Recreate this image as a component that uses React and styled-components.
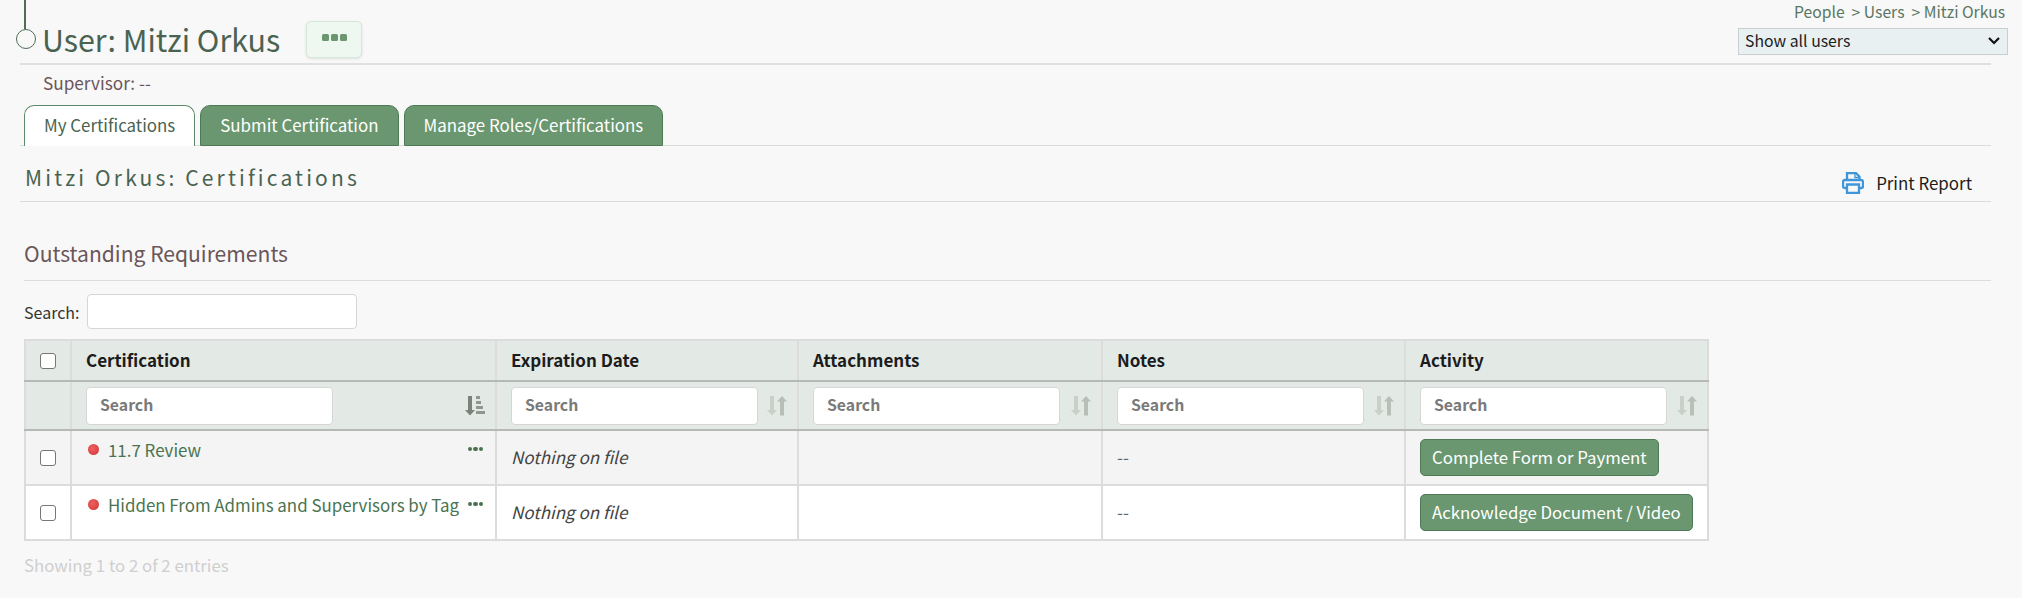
import React from 'react';
import styled, { createGlobalStyle } from 'styled-components';

const GlobalStyle = createGlobalStyle`
  html, body {
    margin: 0;
    padding: 0;
    background: #f8f8f8;
    font-family: "Noto Sans CJK JP", "Noto Sans", sans-serif;
    overflow: hidden;
  }
  * { box-sizing: border-box; }
`;

const Page = styled.div`
  width: 2022px;
  height: 598px;
  position: relative;
  overflow: hidden;
`;

const Timeline = styled.div`
  position: absolute;
  left: 24px;
  top: 0;
  width: 2px;
  height: 29px;
  background: #4f6d56;
`;

const TimelineDot = styled.div`
  position: absolute;
  left: 16px;
  top: 29px;
  width: 20px;
  height: 20px;
  border-radius: 50%;
  border: 1.5px solid #4f6d56;
`;

const Crumbs = styled.div`
  position: absolute;
  right: 17px;
  top: 2px;
  font-size: 15.7px;
  line-height: 20px;
  color: #5a7560;
`;

const UserSelect = styled.div`
  position: absolute;
  left: 1738px;
  top: 28px;
  width: 270px;
  height: 27px;
  background: #e9f0f2;
  border: 1px solid #c9cfcf;
  display: flex;
  align-items: center;
  justify-content: space-between;
  padding: 0 6px 2px 6px;
  font-size: 15.8px;
  color: #1c1c1c;
`;

const TitleBar = styled.div`
  margin: 0 31px 0 20px;
  height: 65px;
  padding: 19px 0 0 22px;
  border-bottom: 2px solid #e0e0e0;
  display: flex;
  align-items: flex-start;
`;

const Title = styled.h1`
  margin: 0;
  font-size: 30.4px;
  line-height: 40px;
  font-weight: 400;
  color: #4a6350;
`;

const MoreButton = styled.div`
  margin: 2px 0 0 26px;
  width: 56px;
  height: 37px;
  background: #eef8f1;
  border: 1px solid #d5e6da;
  border-radius: 5px;
  box-shadow: 0 1px 3px rgba(0, 0, 0, 0.1);
  display: flex;
  align-items: center;
  justify-content: center;
  gap: 2px;
  padding-bottom: 4px;
`;

const Dot = styled.span`
  width: ${(p) => p.$size}px;
  height: ${(p) => p.$size}px;
  border-radius: ${(p) => (p.$size > 5 ? '1.5px' : '50%')};
  background: ${(p) => p.$color};
`;

const Supervisor = styled.div`
  margin: 7px 0 0 43px;
  height: 24px;
  font-size: 17.2px;
  line-height: 22px;
  color: #6b5558;
`;

const Tabs = styled.div`
  margin: 9px 31px 0 20px;
  height: 41px;
  padding-left: 4px;
  border-bottom: 1px solid #dcdcdc;
  display: flex;
  gap: 5px;
`;

const Tab = styled.div`
  height: 41px;
  padding: 0 19px;
  border: 1px solid ${(p) => (p.$active ? '#5d8a66' : '#4f7a58')};
  border-bottom: ${(p) => (p.$active ? '0' : '1px solid #4f7a58')};
  border-radius: 10px 10px 0 0;
  background: ${(p) => (p.$active ? '#ffffff' : '#6a976f')};
  color: ${(p) => (p.$active ? '#4a6350' : '#ffffff')};
  font-size: 16.9px;
  line-height: 38px;
`;

const SectionBar = styled.div`
  margin: 0 31px 0 20px;
  height: 56px;
  padding: 0 0 0 5px;
  border-bottom: 1px solid #dcdcdc;
  display: flex;
  align-items: center;
  justify-content: space-between;
`;

const SectionTitle = styled.h2`
  margin: 7px 0 0;
  font-size: 21px;
  line-height: 28px;
  font-weight: 400;
  letter-spacing: 3.15px;
  color: #4a6350;
`;

const PrintLink = styled.div`
  display: flex;
  align-items: center;
  gap: 12px;
  margin: 18px 19px 0 0;
  font-size: 16.9px;
  color: #1c1c1c;
`;

const Requirements = styled.h3`
  margin: 37px 31px 0 24px;
  height: 42px;
  font-size: 21.1px;
  line-height: 28px;
  font-weight: 400;
  color: #6b5558;
  border-bottom: 1px solid #dcdcdc;
`;

const SearchRow = styled.div`
  margin: 13px 0 0 24px;
  height: 35px;
  display: flex;
  align-items: center;
  gap: 7px;
  font-size: 16px;
  color: #333;
`;

const TextBox = styled.div`
  width: ${(p) => p.$w}px;
  height: ${(p) => p.$h}px;
  background: #fff;
  border: 1px solid #d6d6d6;
  border-radius: 4px;
  padding: 0 0 2px 13px;
  font-size: 15.8px;
  font-weight: 700;
  color: #7a7a7a;
  display: flex;
  align-items: center;
`;

const Table = styled.table`
  margin: 10px 0 0 24px;
  width: 1683px;
  border-collapse: collapse;
  table-layout: fixed;
  border: 2px solid #dcdcdc;
`;

const HeadCell = styled.th`
  height: 41px;
  padding: 0 14px ${(p) => (p.$flush ? '0' : '3px')};
  background: #e3e9e5;
  border-left: 2px solid #dcdcdc;
  border-bottom: 2px solid #b5bab6;
  text-align: left;
  font-size: 17px;
  font-weight: 700;
  color: #1c1c1c;
`;

const FilterCell = styled.td`
  height: 49px;
  padding: 0 14px;
  background: #e3e9e5;
  border-left: 2px solid #dcdcdc;
  border-bottom: 2px solid #b5bab6;
`;

const FilterInner = styled.div`
  display: flex;
  align-items: center;
  justify-content: space-between;
  margin-right: -4px;
`;

const Row = styled.tr`
  background: ${(p) => (p.$odd ? '#f4f4f4' : '#ffffff')};
`;

const Cell = styled.td`
  height: 55px;
  padding: 0 14px ${(p) => (p.$flush ? '0' : '2px')};
  border-left: 2px solid #dcdcdc;
  border-bottom: 2px solid #dcdcdc;
  font-size: 17px;
  color: #333;
  vertical-align: middle;
`;

const Checkbox = styled.span`
  display: block;
  margin: 0 auto;
  width: 16px;
  height: 16px;
  background: #fff;
  border: 1px solid #767676;
  border-radius: 3px;
`;

const CertWrap = styled.div`
  display: flex;
  align-items: flex-start;
  margin: -14px -2px 0 2px;
  font-size: 16.9px;
  line-height: 24px;
  color: #4a7350;
`;

const StatusDot = styled.span`
  flex: none;
  width: 11px;
  height: 11px;
  margin: 6px 9px 0 0;
  border-radius: 50%;
  background: radial-gradient(circle at 40% 40%, #f06060, #cf3434);
`;

const CertName = styled.span`
  flex: 1;
  min-width: 0;
  white-space: nowrap;
`;

const RowMenu = styled.span`
  flex: none;
  display: flex;
  gap: 1px;
  margin-top: 9px;
`;

const NoFile = styled.span`
  font-style: italic;
  color: #444;
`;

const Dash = styled.span`
  color: #666;
`;

const ActionButton = styled.div`
  display: inline-block;
  vertical-align: middle;
  height: 37px;
  padding: 0 11px;
  background: #6a976f;
  border: 1px solid #4f7a58;
  border-radius: 5px;
  color: #fff;
  font-size: 16.8px;
  line-height: 35px;
  white-space: nowrap;
`;

const Info = styled.div`
  margin: 13px 0 0 24px;
  font-size: 16.8px;
  line-height: 22px;
  color: #cfcfcf;
`;

const PrinterIcon = () => (
  <svg width="22" height="22" viewBox="0 0 22 22" fill="none" stroke="#3f96d8" strokeWidth="2.3">
    <path d="M5 8V1.2h9l3.5 3.5V8" />
    <path d="M13 1.5V5.5H17" strokeWidth="1.3" />
    <path d="M5 16H2.5A1.5 1.5 0 0 1 1 14.5V10a2 2 0 0 1 2-2h16a2 2 0 0 1 2 2v4.5a1.5 1.5 0 0 1-1.5 1.5H17" />
    <path d="M5 12.5h12v8.3H5z" />
  </svg>
);

const SortBoth = () => (
  <svg width="20" height="20" viewBox="0 0 20 20">
    <path d="M3 0h4v14h3l-5 5.5L0 14h3z" fill="#c8d0ca" />
    <path d="M13 19.5h4V5.5h3L15 0l-5 5.5h3z" fill="#b6c0b9" />
  </svg>
);

const SortAsc = () => (
  <svg width="20" height="20" viewBox="0 0 20 20" fill="#7a827c">
    <path d="M3 0h4v14h3l-5 5.5L0 14h3z" />
    <path d="M11 0h4v3h-4zM11 5h5v3h-5zM11 10h7v3h-7zM11 15h9v3h-9z" opacity="0.8" />
  </svg>
);

const Chevron = () => (
  <svg width="14" height="10" viewBox="0 0 14 10" fill="none" stroke="#111" strokeWidth="2.2">
    <path d="M2 2l5 5 5-5" />
  </svg>
);

const columns = [
  { title: 'Certification', width: 425, sort: 'asc' },
  { title: 'Expiration Date', width: 302 },
  { title: 'Attachments', width: 304 },
  { title: 'Notes', width: 303 },
  { title: 'Activity', width: 303 },
];

const rows = [
  { name: '11.7 Review', action: 'Complete Form or Payment' },
  { name: 'Hidden From Admins and Supervisors by Tag', action: 'Acknowledge Document / Video' },
];

const App = () => (
  <Page>
    <GlobalStyle />
    <Timeline />
    <TimelineDot />
    <Crumbs>People &nbsp;&gt; Users &nbsp;&gt; Mitzi Orkus</Crumbs>
    <UserSelect>
      Show all users
      <Chevron />
    </UserSelect>
    <TitleBar>
      <Title>User: Mitzi Orkus</Title>
      <MoreButton>
        {[0, 1, 2].map((i) => (
          <Dot key={i} $size={7} $color="#6a976f" />
        ))}
      </MoreButton>
    </TitleBar>
    <Supervisor>Supervisor: --</Supervisor>
    <Tabs>
      <Tab $active>My Certifications</Tab>
      <Tab>Submit Certification</Tab>
      <Tab>Manage Roles/Certifications</Tab>
    </Tabs>
    <SectionBar>
      <SectionTitle>Mitzi Orkus: Certifications</SectionTitle>
      <PrintLink>
        <PrinterIcon />
        Print Report
      </PrintLink>
    </SectionBar>
    <Requirements>Outstanding Requirements</Requirements>
    <SearchRow>
      Search:
      <TextBox $w={270} $h={35} />
    </SearchRow>
    <Table>
      <colgroup>
        <col style={{ width: 46 }} />
        {columns.map((c) => (
          <col key={c.title} style={{ width: c.width }} />
        ))}
      </colgroup>
      <thead>
        <tr>
          <HeadCell $flush>
            <Checkbox />
          </HeadCell>
          {columns.map((c) => (
            <HeadCell key={c.title}>{c.title}</HeadCell>
          ))}
        </tr>
        <tr>
          <FilterCell />
          {columns.map((c) => (
            <FilterCell key={c.title}>
              <FilterInner>
                <TextBox $w={247} $h={38}>Search</TextBox>
                {c.sort === 'asc' ? <SortAsc /> : <SortBoth />}
              </FilterInner>
            </FilterCell>
          ))}
        </tr>
      </thead>
      <tbody>
        {rows.map((r, i) => (
          <Row key={r.name} $odd={i === 0}>
            <Cell $flush>
              <Checkbox />
            </Cell>
            <Cell>
              <CertWrap>
                <StatusDot />
                <CertName>{r.name}</CertName>
                <RowMenu>
                  {[0, 1, 2].map((d) => (
                    <Dot key={d} $size={4.5} $color="#4a7350" />
                  ))}
                </RowMenu>
              </CertWrap>
            </Cell>
            <Cell>
              <NoFile>Nothing on file</NoFile>
            </Cell>
            <Cell />
            <Cell>
              <Dash>--</Dash>
            </Cell>
            <Cell $flush>
              <ActionButton>{r.action}</ActionButton>
            </Cell>
          </Row>
        ))}
      </tbody>
    </Table>
    <Info>Showing 1 to 2 of 2 entries</Info>
  </Page>
);

export default App;
